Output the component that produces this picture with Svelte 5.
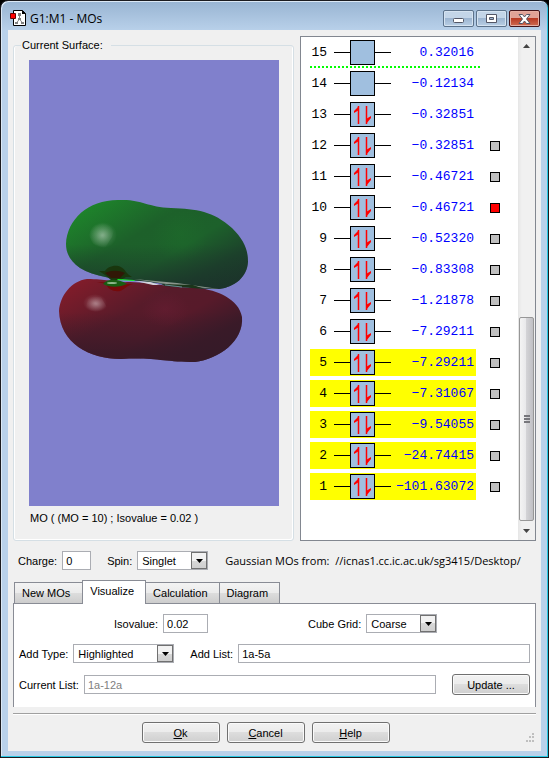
<script lang="ts">
  type Orbital = { n: number; energy: string; occupied: boolean; highlighted: boolean; surface: boolean };

  const energies = [
    '0.32016', '−0.12134', '−0.32851', '−0.32851', '−0.46721',
    '−0.46721', '−0.52320', '−0.83308', '−1.21878', '−7.29211',
    '−7.29211', '−7.31067', '−9.54055', '−24.74415', '−101.63072'
  ];

  let orbitals: Orbital[] = $state(
    energies.map((energy, i) => {
      const n = energies.length - i;
      return { n, energy, occupied: n <= 13, highlighted: n <= 5, surface: n === 10 };
    })
  );

  const tabs = ['New MOs', 'Visualize', 'Calculation', 'Diagram'];
  let activeTab = $state('Visualize');

  let charge = $state('0');
  let spin = $state('Singlet');
  let isovalue = $state('0.02');
  let cubeGrid = $state('Coarse');
  let addType = $state('Highlighted');
  let addList = $state('1a-5a');
</script>

{#snippet dropArrow()}
  <span class="drop" aria-hidden="true">
    <svg width="7" height="4" viewBox="0 0 7 4"><path d="M0 0h7L3.5 4z" /></svg>
  </span>
{/snippet}

<div class="window">
  <header class="titlebar">
    <svg class="app-icon" width="16" height="17" viewBox="0 0 16 17" aria-hidden="true">
      <path d="M3.5 .5h9l3 3v12h-12z" fill="#fff" stroke="#000" />
      <path d="M12 0l4 4h-4z" fill="#000" />
      <path d="M9.5 4v6M9.5 9l-3 4M9.5 9l3 4" stroke="#888" fill="none" />
      <path d="M8 3h3v3H8zM8 8h3v2H8zM5 12h3v2H5zM11 12h3v2h-3z" fill="#808080" />
      <path d="M.5 3.5h5v5h-5z" fill="#f00" stroke="#600" />
    </svg>
    <h1>G1:M1 - MOs</h1>
    <div class="controls">
      <button class="control" aria-label="Minimize">
        <svg class="low" width="11" height="5" viewBox="0 0 11 5"><rect x=".5" y=".5" width="10" height="4" rx="1" fill="#fff" stroke="#535666" /></svg>
      </button>
      <button class="control" aria-label="Maximize">
        <svg width="11" height="9" viewBox="0 0 11 9"><path d="M.5 .5h10v8H.5zM3.5 3.5v2h4v-2z" fill="#fff" fill-rule="evenodd" stroke="#535666" /></svg>
      </button>
      <button class="control close" aria-label="Close">
        <svg width="13" height="10" viewBox="0 0 13 10"><path d="M1 .5h3.500l2 2.500 2-2.500H12L8.500 5 12 9.500H8.500l-2-2.500-2 2.500H1L4.500 5z" fill="#fff" stroke="#535666" /></svg>
      </button>
    </div>
  </header>

  <main class="client">
    <div class="top">
      <fieldset class="surface">
        <legend>Current Surface:</legend>
        <svg class="view" viewBox="0 0 250 446" role="img" aria-label="Molecular orbital 10">
          <defs>
            <linearGradient id="green" x1="0" y1="0.1" x2="1" y2="0.9">
              <stop offset="0" stop-color="#1e8a2b" />
              <stop offset="0.38" stop-color="#1d602a" />
              <stop offset="0.6" stop-color="#1d612b" />
              <stop offset="0.82" stop-color="#1c432b" />
              <stop offset="1" stop-color="#1b362a" />
            </linearGradient>
            <linearGradient id="red" x1="0" y1="0.1" x2="1" y2="0.9">
              <stop offset="0" stop-color="#841c2a" />
              <stop offset="0.38" stop-color="#571b2a" />
              <stop offset="0.58" stop-color="#571a2a" />
              <stop offset="0.8" stop-color="#3b1a28" />
              <stop offset="1" stop-color="#351a28" />
            </linearGradient>
            <linearGradient id="greenShade" x1="0" y1="0" x2="0" y2="1">
              <stop offset="0.5" stop-color="#1c362b" stop-opacity="0" />
              <stop offset="1" stop-color="#1c322b" stop-opacity="0.8" />
            </linearGradient>
            <linearGradient id="redShade" x1="0" y1="0" x2="0" y2="1">
              <stop offset="0.4" stop-color="#351a28" stop-opacity="0" />
              <stop offset="0.9" stop-color="#351a28" stop-opacity="0.8" />
            </linearGradient>
            <radialGradient id="glint">
              <stop offset="0" stop-color="#fff" stop-opacity="0.26" />
              <stop offset="0.5" stop-color="#fff" stop-opacity="0.12" />
              <stop offset="1" stop-color="#fff" stop-opacity="0" />
            </radialGradient>
            <radialGradient id="greenGlow">
              <stop offset="0" stop-color="#1e7a2b" stop-opacity="0.25" />
              <stop offset="1" stop-color="#1e7a2b" stop-opacity="0" />
            </radialGradient>
            <radialGradient id="redGlow">
              <stop offset="0" stop-color="#76203a" stop-opacity="0.3" />
              <stop offset="1" stop-color="#76203a" stop-opacity="0" />
            </radialGradient>
          </defs>
          <path d="M91 140C112 139 118 147 142 148C168 149 184 151 203 168C214 179 219 188 219 202C218 217 206 227 190 229C165 229 140 224 112 221C87 219 65 217 51 208C41 201 37 193 37 184C38 159 60 139 91 140Z" fill="url(#green)" />
          <path d="M91 140C112 139 118 147 142 148C168 149 184 151 203 168C214 179 219 188 219 202C218 217 206 227 190 229C165 229 140 224 112 221C87 219 65 217 51 208C41 201 37 193 37 184C38 159 60 139 91 140Z" fill="url(#greenShade)" />
          <ellipse cx="151" cy="174" rx="28" ry="28" fill="url(#greenGlow)" />
          <path d="M63 166l11-3 12 4-3 10-7 11-12-4-4-9z" fill="url(#glint)" />
          <ellipse cx="74" cy="175" rx="14" ry="13" fill="url(#glint)" />
          <path d="M105 219L150 226 190 229 148 223z" fill="#8a968c" />
          <path d="M58 219C80 219 84 223 101 222C127 223 145 228 169 228C188 230 210 239 213 257C215 281 190 299 166 302C134 302 126 297 92 299C60 299 31 283 30 251C31 236 42 221 58 219Z" fill="url(#red)" />
          <path d="M58 219C80 219 84 223 101 222C127 223 145 228 169 228C188 230 210 239 213 257C215 281 190 299 166 302C134 302 126 297 92 299C60 299 31 283 30 251C31 236 42 221 58 219Z" fill="url(#redShade)" />
          <ellipse cx="136" cy="249" rx="24" ry="18" fill="url(#redGlow)" />
          <path d="M60 236l12 1 7 12-10 3-13-2z" fill="url(#glint)" />
          <ellipse cx="66" cy="243" rx="12" ry="9" fill="url(#glint)" />
          <path d="M70 211h6c3-5 15-9 21 1l3 3 3 2h-6l-5 3H82l-6-5z" fill="#19360d" />
          <path d="M76 213c7-3 13-3 20 0l-5 5h-9z" fill="#311706" />
          <path d="M68 222l9 2c2 5 7 8 14 7 4-1 6-5 13-7h-6l-10-1z" fill="#760a0a" />
          <path d="M74 224c4-5 14-6 24 0-6 3-17 4-24 0z" fill="#195d12" />
          <ellipse cx="83" cy="223" rx="5" ry="1" fill="#8fb78b" />
          <path d="M88 219l17 1 1 1-17-1z" fill="#0cfb22" />
          <path d="M106 221l15 1 10 3h-7z" fill="#d4d4dc" />
          <path d="M132 224l32 1 12 4-40-3z" fill="#1b351a" />
          <path d="M136 225l17 2" stroke="#668b8e" />
        </svg>
        <p class="caption">MO ( (MO = 10) ; Isovalue = 0.02 )</p>
      </fieldset>

      <section class="levels" aria-label="Orbital energies">
        <div class="list">
          {#each orbitals as mo (mo.n)}
            <div class="row">
              <div class="level" class:highlighted={mo.highlighted}>
                <span class="number">{mo.n}</span>
                <span class="wire"></span>
                <span class="cell">
                  {#if mo.occupied}
                    <svg width="23" height="23" viewBox="0 0 23 23" aria-hidden="true">
                      <path d="M7.500 3v18M15.500 3v18" stroke="#f00" stroke-width="1.500" />
                      <path d="M8 3L3 8v2l5-3zM15 21l5-6v-2l-5 3z" fill="#f00" />
                    </svg>
                  {/if}
                </span>
                <span class="wire"></span>
                <span class="energy">{mo.energy}</span>
              </div>
              {#if mo.n <= 12}
                <input type="checkbox" aria-label="Surface for MO {mo.n}" bind:checked={mo.surface} />
              {/if}
            </div>
            {#if mo.n === 15}
              <hr class="divider" />
            {/if}
          {/each}
        </div>
        <div class="scrollbar" aria-hidden="true">
          <svg class="arrow" width="7" height="4" viewBox="0 0 7 4"><path d="M0 4h7L3.500 0z" /></svg>
          <div class="thumb"><i></i><i></i><i></i></div>
          <svg class="arrow" width="7" height="4" viewBox="0 0 7 4"><path d="M0 0h7L3.500 4z" /></svg>
        </div>
      </section>
    </div>

    <div class="state">
      <label for="charge">Charge:</label>
      <input id="charge" class="field charge" type="text" bind:value={charge} />
      <label for="spin">Spin:</label>
      <span class="combo short">
        <select id="spin" bind:value={spin}>
          <option>Singlet</option>
          <option>Triplet</option>
        </select>
        {@render dropArrow()}
      </span>
      <p class="source">Gaussian MOs from: &nbsp;//icnas1.cc.ic.ac.uk/sg3415/Desktop/</p>
    </div>

    <div class="tabs" role="tablist">
      {#each tabs as tab}
        <button class="tab" role="tab" class:active={tab === activeTab} aria-selected={tab === activeTab} onclick={() => (activeTab = tab)}>{tab}</button>
      {/each}
    </div>

    <div class="panel" role="tabpanel">
      <div class="line">
        <label class="iso-label" for="isovalue">Isovalue:</label>
        <input id="isovalue" class="field iso" type="text" bind:value={isovalue} />
        <label class="grid-label" for="cube">Cube Grid:</label>
        <span class="combo short">
          <select id="cube" bind:value={cubeGrid}>
            <option>Coarse</option>
            <option>Medium</option>
            <option>Fine</option>
          </select>
          {@render dropArrow()}
        </span>
      </div>
      <div class="line">
        <label for="add-type">Add Type:</label>
        <span class="combo long">
          <select id="add-type" bind:value={addType}>
            <option>Highlighted</option>
            <option>Occupied</option>
          </select>
          {@render dropArrow()}
        </span>
        <label class="add-label" for="add-list">Add List:</label>
        <input id="add-list" class="field grow" type="text" bind:value={addList} />
      </div>
      <div class="line">
        <label for="current">Current List:</label>
        <input id="current" class="field grow" type="text" value="1a-12a" disabled />
        <button class="push update">Update ...</button>
      </div>
    </div>

    <footer class="footer">
      <button class="push"><u>O</u>k</button>
      <button class="push"><u>C</u>ancel</button>
      <button class="push"><u>H</u>elp</button>
      <svg class="grip" width="10" height="10" viewBox="0 0 10 10" aria-hidden="true">
        <path d="M7 0h2v2H7zM4 3h2v2H4zM7 3h2v2H7zM1 7h2v2H1zM4 7h2v2H4zM7 7h2v2H7z" fill="#bfbfbf" />
      </svg>
    </footer>
  </main>
</div>

<style>
  :global(body) {
    background: #000;
  }

  .window {
    box-sizing: border-box;
    display: flex;
    flex-direction: column;
    min-height: 100vh;
    padding: 0 6px 6px;
    border: 1px solid #1b1b1f;
    border-radius: 8px 8px 0 0;
    background: linear-gradient(#98b4d2, #b9d1ea 30px);
    box-shadow: inset -1px -1px #27c8e3, inset 1px 1px #dbe8f5;
    font: 11px/14px "Liberation Sans", Arial, sans-serif;
    color: #000;
  }

  input,
  select,
  button {
    font: inherit;
    color: inherit;
  }

  p,
  h1 {
    margin: 0;
  }

  /* Title bar */
  .titlebar {
    display: flex;
    align-items: center;
    gap: 4px;
    height: 29px;
    padding: 6px 2px 0 3px;
    box-sizing: border-box;
  }

  h1 {
    flex: 1;
    font: 12px/16px "Open Sans", "Noto Sans", sans-serif;
  }

  .controls {
    display: flex;
    gap: 2px;
  }

  .control {
    display: flex;
    align-items: center;
    justify-content: center;
    width: 31px;
    height: 17px;
    padding: 0;
    border: 1px solid #5c728b;
    border-radius: 2px;
    background: linear-gradient(#c3d5e8 45%, #9cb5d1 50%, #b9cfe5);
    box-shadow: inset 0 0 0 1px #d5e3f1;
  }

  .control .low {
    margin-top: 4px;
  }

  .control.close {
    border-color: #43141a;
    background: linear-gradient(#e0a297 45%, #b83a24 50%, #cf6b51);
    box-shadow: inset 0 0 0 1px #e5aea3;
  }

  /* Client area */
  .client {
    flex: 1;
    display: flex;
    flex-direction: column;
    margin: 0 1px;
    padding: 6px 5px 8px;
    background: #f0f0f0;
  }

  .top {
    flex: 1;
    display: grid;
    grid-template-columns: 281fr 236fr;
    gap: 6px;
  }

  .surface {
    display: flex;
    flex-direction: column;
    min-width: 0;
    margin: 2px 0 0;
    padding: 8px 14px 15px 15px;
    border: 1px solid #d5dfe5;
    border-radius: 3px;
    box-shadow: inset 1px 0 #fff, inset -1px -1px #fff;
  }

  legend {
    margin-left: -8px;
    padding: 0 8px 0 1px;
  }

  .view {
    display: block;
    flex: 1;
    width: 100%;
    min-height: 0;
    background: #8080cc;
  }

  .caption {
    padding: 5px 1px 0;
  }

  /* Orbital diagram */
  .levels {
    display: flex;
    border: 1px solid #828790;
    background: #fff;
  }

  .list {
    flex: 1;
    padding: 2px 0 0 9px;
  }

  .row {
    display: flex;
    align-items: center;
    gap: 14px;
    margin-bottom: 4px;
  }

  .level {
    display: flex;
    align-items: center;
    width: 166px;
    height: 27px;
    font: 13px/16px "Liberation Mono", "Courier New", monospace;
  }

  .level.highlighted {
    background: #ff0;
  }

  .number {
    width: 17px;
    margin-right: 7px;
    text-align: right;
  }

  .wire {
    width: 16px;
    height: 1px;
    background: #000;
  }

  .cell {
    width: 23px;
    height: 23px;
    border: 1px solid #000;
    background: #a0bfdf;
  }

  .cell svg {
    display: block;
  }

  .energy {
    flex: 1;
    padding-right: 2px;
    text-align: right;
    color: #00f;
  }

  .row input {
    appearance: none;
    width: 10px;
    height: 10px;
    margin: 0;
    border: 1px solid #000;
    background: #c0c0c0;
  }

  .row input:checked {
    background: #f00;
  }

  .divider {
    width: 170px;
    height: 2px;
    margin: -4px 0 2px;
    border: 0;
    background: repeating-linear-gradient(90deg, #0f0 0 2px, #fff 2px 4px);
  }

  .scrollbar {
    display: flex;
    flex-direction: column;
    justify-content: space-between;
    align-items: center;
    width: 17px;
    padding: 7px 0;
    box-sizing: border-box;
    background: linear-gradient(90deg, #e6e6e6, #f0f0f0 4px);
  }

  .arrow {
    fill: #444;
  }

  .thumb {
    display: flex;
    flex-direction: column;
    align-items: center;
    justify-content: center;
    gap: 1px;
    width: 15px;
    height: 204px;
    margin: auto 0 8px;
    box-sizing: border-box;
    border: 1px solid #979797;
    border-radius: 2px;
    background: linear-gradient(90deg, #f4f4f4, #e9e9eb 45%, #d3d3d6 50%, #c0c0c4);
  }

  .thumb i {
    width: 6px;
    height: 2px;
    background: #77777c;
  }

  /* Charge and spin */
  .state {
    display: flex;
    align-items: center;
    padding: 10px 5px 0;
  }

  label {
    margin-right: 5px;
    white-space: nowrap;
  }

  .field {
    box-sizing: border-box;
    height: 19px;
    min-width: 0;
    padding: 0 3px;
    border: 1px solid #abadb3;
    background: #fff;
  }

  .field:disabled {
    color: #808080;
  }

  .charge {
    width: 29px;
    margin-right: 16px;
  }

  .combo {
    position: relative;
    display: flex;
    height: 19px;
  }

  .combo.short {
    width: 71px;
  }

  .combo.long {
    width: 101px;
  }

  select {
    appearance: none;
    width: 100%;
    padding: 0 18px 0 4px;
    border: 1px solid #abadb3;
    border-radius: 0;
    background: #fff;
  }

  .drop {
    position: absolute;
    top: 1px;
    right: 1px;
    bottom: 1px;
    display: flex;
    align-items: center;
    justify-content: center;
    width: 16px;
    box-sizing: border-box;
    border: 1px solid #707070;
    background: linear-gradient(#f2f2f2 50%, #d8d8d8 50%, #cfcfcf);
    pointer-events: none;
  }

  .source {
    flex: 1;
    min-width: 0;
    margin-left: 17px;
    overflow: hidden;
    white-space: nowrap;
    font: 11px/18px "Open Sans", "Noto Sans", sans-serif;
  }

  /* Tabs */
  .tabs {
    display: flex;
    align-items: flex-end;
    margin: 10px 0 -1px 1px;
  }

  .tab {
    height: 22px;
    padding: 0 12px 0 7px;
    border: 1px solid #898c95;
    background: linear-gradient(#f3f3f3, #ebebeb 50%, #dddddd 50%, #cdcdcd);
  }

  .tab + .tab {
    margin-left: -1px;
    padding-right: 11px;
  }

  .tab.active {
    height: 24px;
    padding-bottom: 3px;
    border-bottom: 0;
    background: #fff;
    z-index: 1;
  }

  .panel {
    display: flex;
    flex-direction: column;
    gap: 11px;
    padding: 10px 5px 12px;
    border: 1px solid #898c95;
    border-bottom: 0;
    background: #fff;
  }

  .line {
    display: flex;
    align-items: center;
  }

  .iso-label {
    margin-left: 95px;
  }

  .iso {
    width: 45px;
  }

  .grid-label {
    margin-left: 100px;
  }

  .add-label {
    margin-left: 16px;
  }

  .grow {
    flex: 1;
  }

  .push {
    width: 78px;
    height: 21px;
    padding: 0;
    border: 1px solid #707070;
    border-radius: 3px;
    background: linear-gradient(#f2f2f2, #ebebeb 50%, #dddddd 50%, #cfcfcf);
    box-shadow: inset 0 0 0 1px #fafafa;
  }

  .update {
    margin-left: 16px;
  }

  .footer {
    position: relative;
    display: flex;
    justify-content: center;
    gap: 7px;
    margin-top: 6px;
    padding: 8px 18px 0 0;
    border-top: 1px solid #a0a0a0;
    box-shadow: inset 0 1px #fff;
  }

  .grip {
    position: absolute;
    right: 1px;
    bottom: 0;
  }
</style>
